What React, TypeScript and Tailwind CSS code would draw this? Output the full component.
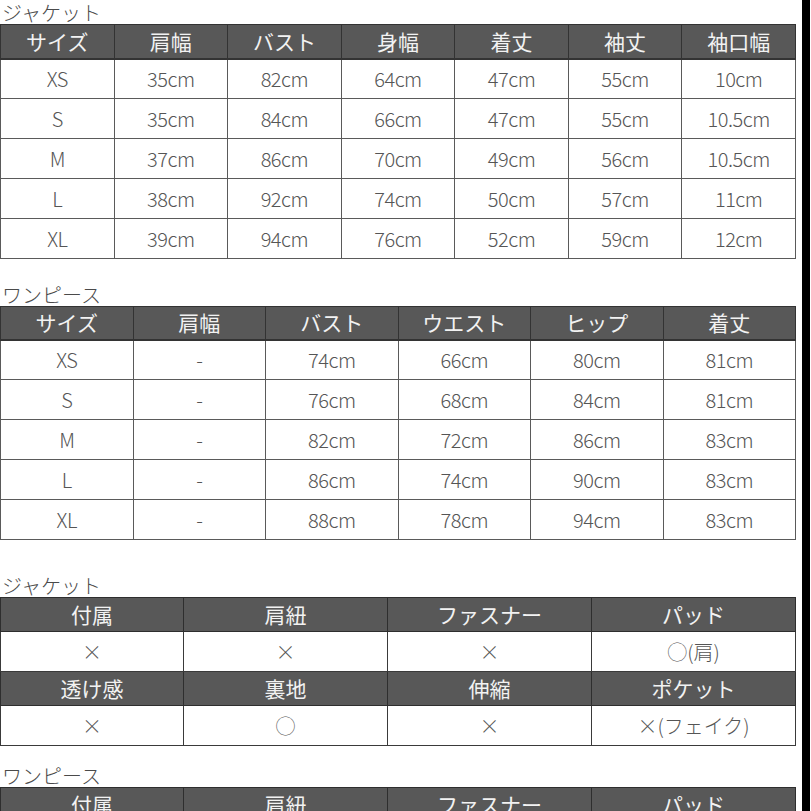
const jacketSizes = {
  head: ["サイズ", "肩幅", "バスト", "身幅", "着丈", "袖丈", "袖口幅"],
  rows: [
    ["XS", "35cm", "82cm", "64cm", "47cm", "55cm", "10cm"],
    ["S", "35cm", "84cm", "66cm", "47cm", "55cm", "10.5cm"],
    ["M", "37cm", "86cm", "70cm", "49cm", "56cm", "10.5cm"],
    ["L", "38cm", "92cm", "74cm", "50cm", "57cm", "11cm"],
    ["XL", "39cm", "94cm", "76cm", "52cm", "59cm", "12cm"],
  ],
};

const dressSizes = {
  head: ["サイズ", "肩幅", "バスト", "ウエスト", "ヒップ", "着丈"],
  rows: [
    ["XS", "-", "74cm", "66cm", "80cm", "81cm"],
    ["S", "-", "76cm", "68cm", "84cm", "81cm"],
    ["M", "-", "82cm", "72cm", "86cm", "83cm"],
    ["L", "-", "86cm", "74cm", "90cm", "83cm"],
    ["XL", "-", "88cm", "78cm", "94cm", "83cm"],
  ],
};

const font = { fontFamily: '"Noto Sans CJK JP", "Noto Sans", sans-serif' };

function Title({ children }: { children: string }) {
  return (
    <div className="h-[24px] shrink-0 flex items-center pl-[2px] pt-[1px] text-[20px] leading-[22px] text-[#4a4a4a] font-light">
      {children}
    </div>
  );
}

function SizeTable({ head, rows, headH }: { head: string[]; rows: string[][]; headH: string }) {
  return (
    <table className="w-full shrink-0 table-fixed border-collapse">
      <thead>
        <tr className={headH}>
          {head.map((h) => (
            <th
              key={h}
              className="bg-[#585858] border border-[#333] border-b-2 text-[21px] font-normal text-[#f2f2f2] leading-none"
            >
              {h}
            </th>
          ))}
        </tr>
      </thead>
      <tbody>
        {rows.map((r) => (
          <tr key={r[0]} className="h-[40px]">
            {r.map((c, i) => (
              <td
                key={i}
                className="border border-[#5a5a5a] text-center text-[20px] font-light text-[#555] leading-none tracking-[-0.5px]"
              >
                {c}
              </td>
            ))}
          </tr>
        ))}
      </tbody>
    </table>
  );
}

function SpecTable({ blocks }: { blocks: { head: string[]; vals: string[] }[] }) {
  return (
    <table className="w-full shrink-0 table-fixed border-collapse">
      <colgroup>
        <col className="w-[183px]" />
        <col />
        <col />
        <col />
      </colgroup>
      <tbody>
        {blocks.map((b, bi) => (
          <>
            <tr key={"h" + bi} className="h-[34px]">
              {b.head.map((h) => (
                <td
                  key={h}
                  className="bg-[#585858] border border-[#2e2e2e] text-center text-[21px] text-[#f2f2f2] leading-none"
                >
                  {h}
                </td>
              ))}
            </tr>
            {b.vals.length > 0 && (
              <tr key={"v" + bi} className="h-[40px]">
                {b.vals.map((v, i) => (
                  <td
                    key={i}
                    className="border border-[#3a3a3a] text-center text-[20px] font-light text-[#555] leading-none"
                  >
                    {v}
                  </td>
                ))}
              </tr>
            )}
          </>
        ))}
      </tbody>
    </table>
  );
}

export default function App() {
  return (
    <div className="w-[811px] h-[811px] overflow-hidden bg-white flex" style={font}>
      <div className="w-[796px] shrink-0 flex flex-col">
        <Title>ジャケット</Title>
        <SizeTable head={jacketSizes.head} rows={jacketSizes.rows} headH="h-[34px]" />
        <div className="h-[23px] shrink-0" />
        <Title>ワンピース</Title>
        <SizeTable head={dressSizes.head} rows={dressSizes.rows} headH="h-[33px]" />
        <div className="h-[33px] shrink-0" />
        <Title>ジャケット</Title>
        <SpecTable
          blocks={[
            { head: ["付属", "肩紐", "ファスナー", "パッド"], vals: ["×", "×", "×", "◯(肩)"] },
            { head: ["透け感", "裏地", "伸縮", "ポケット"], vals: ["×", "◯", "×", "×(フェイク)"] },
          ]}
        />
        <div className="h-[17px] shrink-0" />
        <Title>ワンピース</Title>
        <SpecTable blocks={[{ head: ["付属", "肩紐", "ファスナー", "パッド"], vals: [] }]} />
      </div>
      <div className="w-[6px] shrink-0" />
      <div className="w-[8px] shrink-0 bg-black" />
    </div>
  );
}
